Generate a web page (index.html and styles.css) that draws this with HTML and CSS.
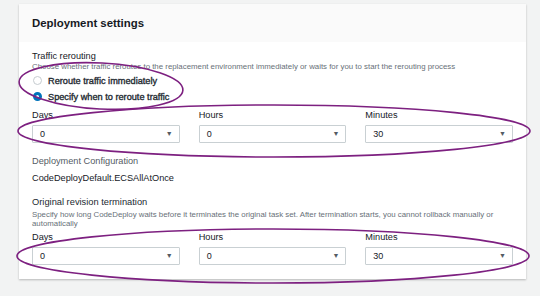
FILE: index.html
```html
<!DOCTYPE html>
<html lang="en">
<head>
    <meta charset="UTF-8">
    <meta name="viewport" content="width=device-width, initial-scale=1.0">
    <title>Deployment settings</title>
    <link rel="stylesheet" href="styles.css">
</head>
<body>
    <div class="panel">
        <div class="panel-header">
            <h2>Deployment settings</h2>
        </div>
        <div class="panel-body">
            <div class="field-label">Traffic rerouting</div>
            <div class="field-desc">Choose whether traffic reroutes to the replacement environment immediately or waits for you to start the rerouting process</div>
            <div class="radio-group">
                <label class="radio"><span class="radio-dot"></span>Reroute traffic immediately</label>
                <label class="radio"><span class="radio-dot checked"></span>Specify when to reroute traffic</label>
            </div>
            <div class="time-row first">
                <div class="time-col">
                    <div class="field-label">Days</div>
                    <div class="select"><span>0</span><span class="arrow">&#9660;</span></div>
                </div>
                <div class="time-col">
                    <div class="field-label">Hours</div>
                    <div class="select"><span>0</span><span class="arrow">&#9660;</span></div>
                </div>
                <div class="time-col">
                    <div class="field-label">Minutes</div>
                    <div class="select"><span>30</span><span class="arrow">&#9660;</span></div>
                </div>
            </div>
            <div class="field-label muted config-label">Deployment Configuration</div>
            <div class="field-value">CodeDeployDefault.ECSAllAtOnce</div>
            <div class="field-label section-label">Original revision termination</div>
            <div class="field-desc wrap">Specify how long CodeDeploy waits before it terminates the original task set. After termination starts, you cannot rollback manually or automatically</div>
            <div class="time-row second">
                <div class="time-col">
                    <div class="field-label">Days</div>
                    <div class="select"><span>0</span><span class="arrow">&#9660;</span></div>
                </div>
                <div class="time-col">
                    <div class="field-label">Hours</div>
                    <div class="select"><span>0</span><span class="arrow">&#9660;</span></div>
                </div>
                <div class="time-col">
                    <div class="field-label">Minutes</div>
                    <div class="select"><span>30</span><span class="arrow">&#9660;</span></div>
                </div>
            </div>
        </div>
    </div>
    <!-- hand-drawn annotation circles on top of the screenshot -->
    <svg class="marks" width="540" height="296" viewBox="0 0 540 296">
        <ellipse cx="101" cy="86" rx="82" ry="23" transform="rotate(3 101 86)"/>
        <ellipse cx="274" cy="131" rx="256" ry="26"/>
        <ellipse cx="273" cy="256" rx="256" ry="27"/>
    </svg>
</body>
</html>
```

FILE: styles.css
```css
body {
    margin: 0;
    padding: 4px 14px 0 19px;
    background-color: #f2f3f3;
    font-family: "Liberation Sans", Arial, sans-serif;
    color: #16191f;
    position: relative;
    height: 292px;
    overflow: hidden;
}
.panel {
    background-color: white;
    box-shadow: 0 1px 2px rgba(0,0,0,0.25);
}
.panel-header {
    background-color: #fafafa;
    height: 38px;
    padding: 0 13px;
    display: flex;
    align-items: center;
}
h2 {
    margin: 0;
    font-size: 11.4px;
    font-weight: bold;
}
.panel-body {
    padding: 9px 13px 14px 13px;
}
.field-label {
    font-size: 9.2px;
    line-height: 11px;
}
.field-desc {
    font-size: 7.85px;
    line-height: 10px;
    color: #687078;
    white-space: nowrap;
}
.field-desc.wrap {
    white-space: normal;
    line-height: 9px;
    margin-top: 2px;
    padding-right: 6px;
}
.muted {
    color: #545b64;
}
.radio-group {
    margin-top: 0.5px;
}
.radio {
    display: flex;
    align-items: center;
    height: 16px;
    font-size: 9.2px;
    color: #232a31;
    -webkit-text-stroke: 0.35px #232a31;
}
.radio-dot {
    width: 7px;
    height: 7px;
    border: 1px solid #c6ccd0;
    border-radius: 50%;
    margin: 0 6px 0 1px;
    background-color: white;
}
.radio-dot.checked {
    width: 3px;
    height: 3px;
    border: 3px solid #0073bb;
}
.time-row {
    display: grid;
    grid-template-columns: 1fr 1fr 1fr;
    column-gap: 19px;
}
.time-row.first {
    margin-top: 5px;
}
.time-row.second {
    margin-top: 4px;
}
.time-col .field-label {
    margin-bottom: 4px;
}
.select {
    height: 16px;
    border: 1px solid #c9d0d3;
    border-radius: 1px;
    display: flex;
    align-items: center;
    justify-content: space-between;
    padding: 0 6px 0 7px;
    font-size: 9px;
}
.arrow {
    font-size: 7px;
    color: #545b64;
}
.config-label {
    margin-top: 13px;
}
.field-value {
    font-size: 9.2px;
    line-height: 11px;
    margin-top: 6px;
}
.section-label {
    margin-top: 13px;
    font-size: 9.3px;
    color: #232a31;
}
.marks {
    position: absolute;
    left: 0;
    top: 0;
    pointer-events: none;
}
.marks ellipse {
    fill: none;
    stroke: #7d2080;
    stroke-width: 1.6;
}
```
